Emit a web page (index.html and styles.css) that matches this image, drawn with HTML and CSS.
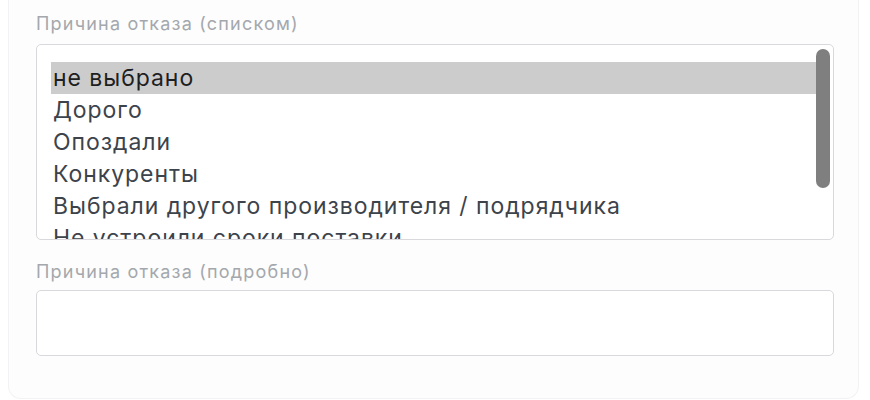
FILE: index.html
```html
<!DOCTYPE html>
<html lang="ru">
<head>
<meta charset="utf-8">
<link rel="stylesheet" href="styles.css">
</head>
<body>
<div class="card">
  <div class="field field-list">
    <div class="label">Причина отказа (списком)</div>
    <div class="listbox">
      <div class="options">
        <div class="option selected">не выбрано</div>
        <div class="option">Дорого</div>
        <div class="option">Опоздали</div>
        <div class="option">Конкуренты</div>
        <div class="option">Выбрали другого производителя / подрядчика</div>
        <div class="option">Не устроили сроки поставки</div>
        <div class="option">Другое</div>
      </div>
      <div class="scroll-thumb"></div>
    </div>
  </div>
  <div class="field field-text">
    <div class="label">Причина отказа (подробно)</div>
    <div class="textbox"></div>
  </div>
</div>
</body>
</html>
```

FILE: styles.css
```css
html, body {
  margin: 0;
  padding: 0;
  background: #ffffff;
}
body {
  font-family: Inter, "Noto Sans", sans-serif;
  width: 870px;
  height: 400px;
  overflow: hidden;
}
.card {
  margin-left: 8px;
  width: 851px;
  height: 399px;
  background: #fdfdfd;
  border: 1px solid #f2f2f4;
  border-top: none;
  border-radius: 0 0 13px 13px;
  padding: 14px 0 0 27px;
  box-sizing: border-box;
}
.label {
  font-size: 18px;
  line-height: 20px;
  color: #a4a8ad;
  letter-spacing: 1.2px;
  white-space: nowrap;
}
.field-list .label {
  margin-bottom: 10px;
}
.listbox {
  position: relative;
  width: 798px;
  height: 196px;
  box-sizing: border-box;
  border: 1px solid #d9d9dd;
  border-radius: 5px;
  background: #ffffff;
  overflow: hidden;
}
.options {
  padding: 17px 0 0 14px;
}
.option {
  height: 32px;
  line-height: 33px;
  font-size: 23px;
  letter-spacing: 0.95px;
  color: #3d434b;
  padding-left: 2px;
  width: 764px;
  white-space: nowrap;
}
.option.selected {
  background: #cccccc;
  color: #1e1f22;
}
.scroll-thumb {
  position: absolute;
  top: 4px;
  left: 779px;
  width: 14px;
  height: 139px;
  border-radius: 7px;
  background: #7f7f7f;
}
.field-text {
  margin-top: 22px;
}
.field-text .label {
  margin-bottom: 8px;
}
.textbox {
  width: 798px;
  height: 66px;
  box-sizing: border-box;
  border: 1px solid #d9d9dd;
  border-radius: 5px;
  background: #ffffff;
}
```
